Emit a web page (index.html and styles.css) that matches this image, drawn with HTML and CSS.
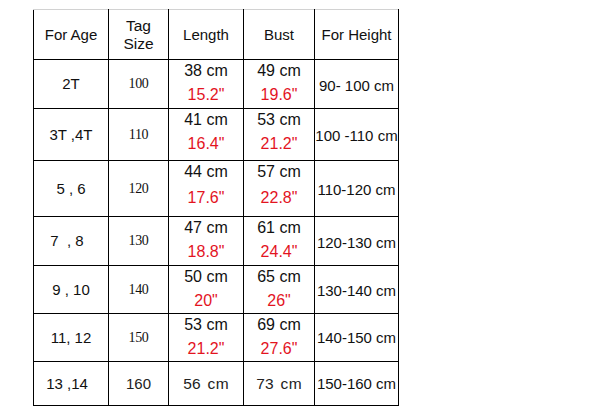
FILE: index.html
```html
<!DOCTYPE html>
<html>
<head>
<meta charset="utf-8">
<link rel="stylesheet" href="styles.css">
</head>
<body>
<table class="size-table">
  <colgroup>
    <col class="c-age"><col class="c-tag"><col class="c-len"><col class="c-bust"><col class="c-height">
  </colgroup>
  <tr class="r-head">
    <th>For Age</th>
    <th class="tag-head">Tag<br>Size</th>
    <th class="len-head">Length</th>
    <th>Bust</th>
    <th class="h-head">For Height</th>
  </tr>
  <tr class="r1">
    <td class="age age-2t">2T</td>
    <td class="tag">100</td>
    <td class="m"><div>38 cm</div><div class="in">15.2"</div></td>
    <td class="m"><div>49 cm</div><div class="in">19.6"</div></td>
    <td class="hgt">90- 100 cm</td>
  </tr>
  <tr class="r2">
    <td class="age">3T ,4T</td>
    <td class="tag">110</td>
    <td class="m"><div>41 cm</div><div class="in">16.4"</div></td>
    <td class="m"><div>53 cm</div><div class="in">21.2"</div></td>
    <td class="hgt">100 -110 cm</td>
  </tr>
  <tr class="r3">
    <td class="age">5 , 6</td>
    <td class="tag">120</td>
    <td class="m"><div>44 cm</div><div class="in">17.6"</div></td>
    <td class="m"><div>57 cm</div><div class="in">22.8"</div></td>
    <td class="hgt">110-120 cm</td>
  </tr>
  <tr class="r4">
    <td class="age">7&nbsp; , 8</td>
    <td class="tag">130</td>
    <td class="m"><div>47 cm</div><div class="in">18.8"</div></td>
    <td class="m"><div>61 cm</div><div class="in">24.4"</div></td>
    <td class="hgt">120-130 cm</td>
  </tr>
  <tr class="r5">
    <td class="age">9 , 10</td>
    <td class="tag">140</td>
    <td class="m"><div>50 cm</div><div class="in">20"</div></td>
    <td class="m"><div>65 cm</div><div class="in">26"</div></td>
    <td class="hgt">130-140 cm</td>
  </tr>
  <tr class="r6">
    <td class="age">11, 12</td>
    <td class="tag">150</td>
    <td class="m"><div>53 cm</div><div class="in">21.2"</div></td>
    <td class="m"><div>69 cm</div><div class="in">27.6"</div></td>
    <td class="hgt">140-150 cm</td>
  </tr>
  <tr class="r7">
    <td class="age age-last">13 ,14</td>
    <td class="tag-last">160</td>
    <td class="last">56 cm</td>
    <td class="last">73 cm</td>
    <td class="hgt">150-160 cm</td>
  </tr>
</table>
</body>
</html>
```
FILE: styles.css
```css
html, body {
  margin: 0;
  padding: 0;
  background: #fff;
}
body {
  font-family: "Liberation Sans", Arial, sans-serif;
  font-size: 15px;
  color: #111;
}
.size-table {
  margin: 9px 0 0 33px;
  border-collapse: collapse;
  table-layout: fixed;
  width: 365px;
}
.c-age { width: 75px; }
.c-tag { width: 60px; }
.c-len { width: 75px; }
.c-bust { width: 71px; }
.c-height { width: 84px; }
.size-table th,
.size-table td {
  border: 1px solid #000;
  padding: 0;
  text-align: center;
  vertical-align: middle;
  white-space: nowrap;
  overflow: visible;
  font-weight: normal;
  line-height: 18px;
}
.size-table th {
  border-top-color: #d2d2d2;
}
.r-head { height: 50px; }
.r1 { height: 49px; }
.r2 { height: 52px; }
.r3 { height: 56px; }
.r4 { height: 49px; }
.r5 { height: 48px; }
.r6 { height: 48px; }
.r7 { height: 44px; }
.tag-head {
  line-height: 19px;
  font-size: 15.5px;
  padding-top: 1px;
}
.len-head, .h-head {
  padding-top: 3px;
}
.age-2t { padding-right: 12px; }
.r4 .age, .r7 .age { padding-right: 8px; }
.tag {
  font-family: "Liberation Serif", "Times New Roman", serif;
  font-size: 14px;
  letter-spacing: -0.3px;
}
.tag-last {
  color: #222;
  font-size: 15px;
}
.size-table td.m {
  vertical-align: top;
  font-size: 16px;
  line-height: 21px;
  padding-top: 0;
}
.in {
  color: #e3141f;
  margin-top: 3px;
}
.r3 .in { margin-top: 5px; }
.r1 .hgt, .r2 .hgt, .r3 .hgt, .r4 .hgt, .r5 .hgt {
  padding-top: 3px;
}
.last {
  color: #222;
  font-size: 15.5px;
  letter-spacing: 0.3px;
  word-spacing: 2px;
}
```
